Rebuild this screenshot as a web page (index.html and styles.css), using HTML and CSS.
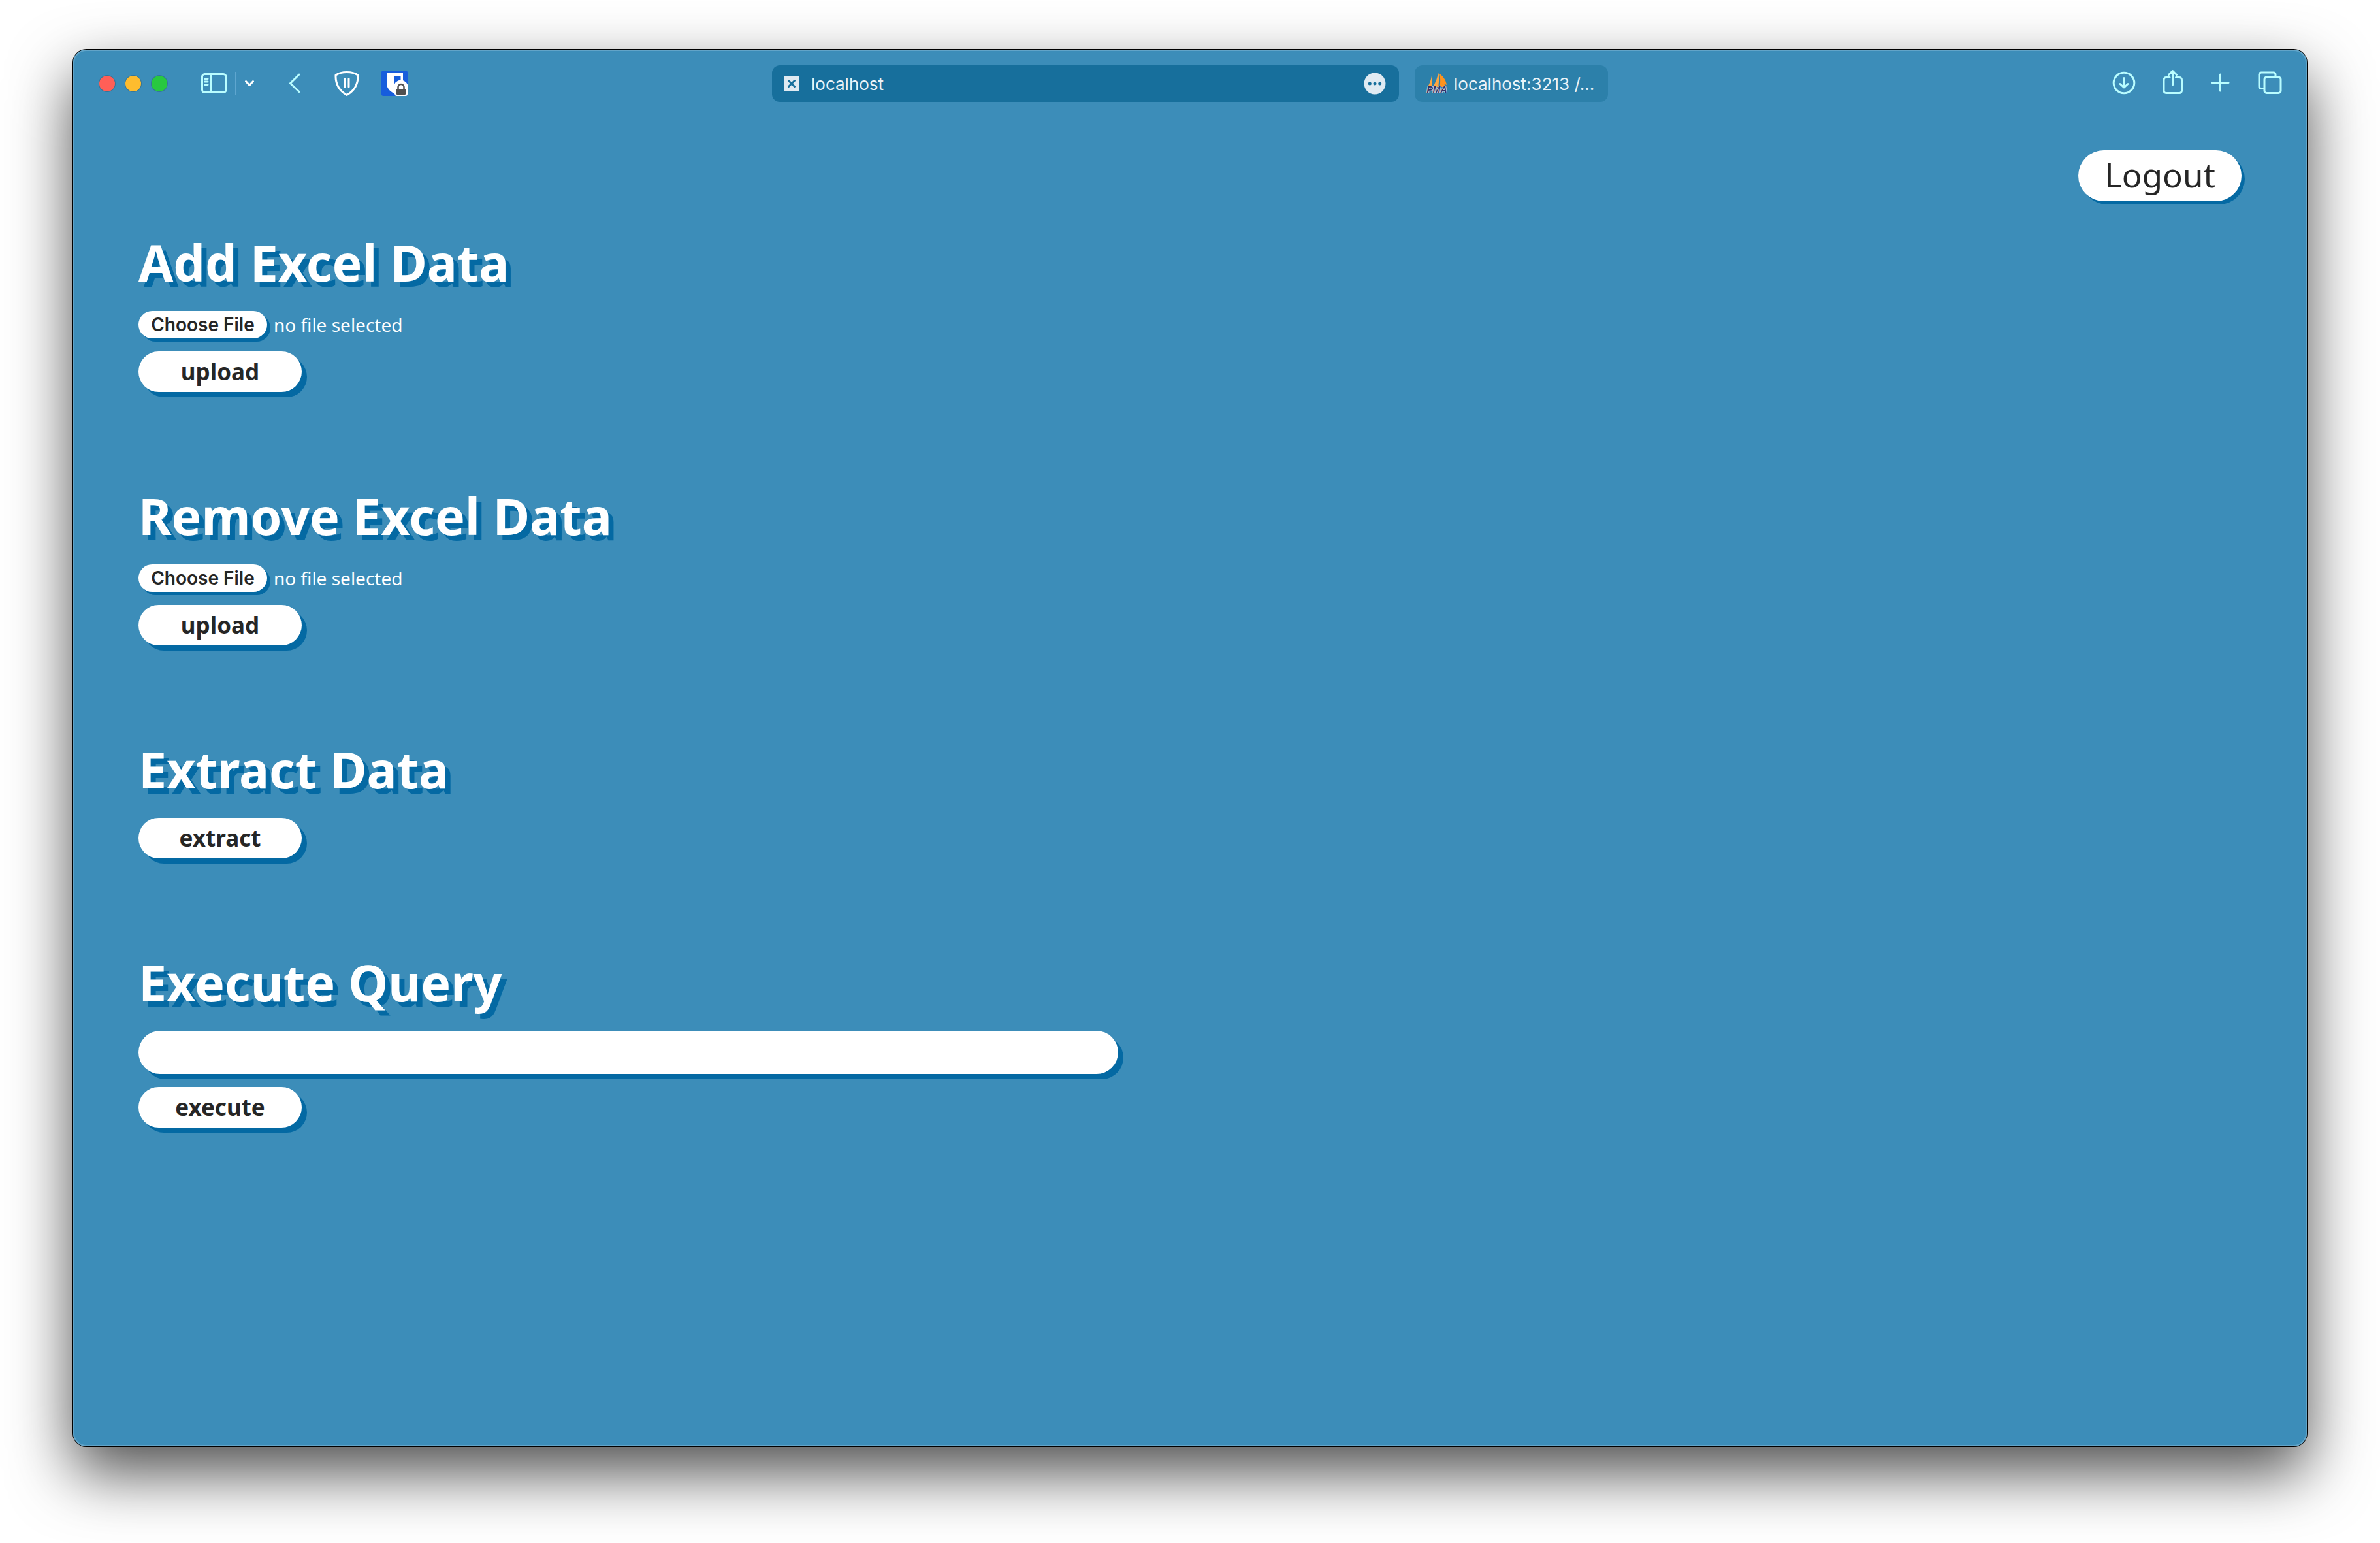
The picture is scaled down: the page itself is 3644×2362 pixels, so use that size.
FILE: index.html
```html
<!DOCTYPE html>
<html lang="en">
<head>
<meta charset="utf-8">
<title>localhost</title>
<link rel="stylesheet" href="styles.css">
</head>
<body>
<div class="window">
  <header class="toolbar">
    <div class="toolbar-left">
      <div class="lights">
        <button class="light light-close" aria-label="Close"></button>
        <button class="light light-minimise" aria-label="Minimise"></button>
        <button class="light light-zoom" aria-label="Zoom"></button>
      </div>
      <div class="sidebar-group">
        <button class="icon-button" aria-label="Sidebar">
          <svg width="40" height="40" viewBox="0 0 40 40" class="line-icon"><rect x="1.5" y="5.5" width="36.5" height="28" rx="4"/><path d="M14.5 5.5v28M5.5 12.5h4.5M5.5 17h4.5M5.5 21.5h4.5"/></svg>
        </button>
        <span class="divider"></span>
        <button class="icon-button" aria-label="Tab groups">
          <svg width="16" height="40" viewBox="0 0 16 40" class="line-icon white-icon"><path d="M2.5 16.5l5.5 6 5.5-6"/></svg>
        </button>
      </div>
      <button class="icon-button" aria-label="Back">
        <svg width="18" height="40" viewBox="0 0 18 40" class="line-icon"><path d="M16 6L2.5 19.5 16 32.5"/></svg>
      </button>
      <div class="extensions">
        <button class="icon-button" aria-label="Content blocker">
          <svg width="38" height="40" viewBox="0 0 38 40" class="line-icon white-icon"><path d="M2 7C7 3.500 13 2.500 19 2.500S31 3.500 36 7C36.500 20 32 30 19 37.500C6 30 1.500 20 2 7z"/><path d="M16 12.500v12.500M22 12.500v12.500"/></svg>
        </button>
        <button class="icon-button" aria-label="Password manager">
          <svg width="40" height="40" viewBox="0 0 40 40"><rect x="0" y="0" width="40" height="39" rx="3" fill="#175ddc"/><path d="M8 4h25v16c0 8-7 13-12.500 16C15 33 8 28 8 20z" fill="#fff"/><path d="M20 8h9.500v13H20z" fill="#175ddc"/><path d="M19.500 30a10.500 10.500 0 0 1 20.500-8.500V36a3 3 0 0 1-3 3H22c-2-2-2.500-5-2.500-9z" fill="#fff"/><rect x="23" y="28" width="14" height="9" rx="1" fill="#505050"/><path d="M25.500 28v-2.500a4.500 4.500 0 0 1 9 0V28" fill="none" stroke="#505050" stroke-width="2.500"/></svg>
        </button>
      </div>
    </div>
    <nav class="tabs" aria-label="Tabs">
      <div class="tab tab-active">
        <svg width="24" height="24" viewBox="0 0 24 24"><rect width="24" height="24" rx="4" fill="#dfeaf2"/><path d="M7.500 7.500l9 9M16.500 7.500l-9 9" stroke="#176f9c" stroke-width="3" stroke-linecap="round"/></svg>
        <span class="tab-title">localhost</span>
        <button class="icon-button" aria-label="Page menu">
          <svg width="34" height="34" viewBox="0 0 34 34"><circle cx="17" cy="17" r="16.500" fill="#dfeaf2"/><circle cx="9.300" cy="17" r="2.500" fill="#176f9c"/><circle cx="17" cy="17" r="2.500" fill="#176f9c"/><circle cx="24.700" cy="17" r="2.500" fill="#176f9c"/></svg>
        </button>
      </div>
      <a class="tab tab-other" href="#">
        <svg width="32" height="34" viewBox="0 0 32 34" class="favicon"><path d="M8 5.500C9 11 8.500 17 8.500 22H2C5 17 7 11 8 5.500z" fill="#ffa640"/><path d="M18 0C20.500 8 18.500 15 18.500 22H10C14 15 17 8 18 0z" fill="#ffa640"/><path d="M20 2C26 6 30 12 31 19L27.500 17.500L29 22H20.500C21.500 14 21.500 8 20 2z" fill="#ff931e"/><text x="16" y="31" text-anchor="middle" class="pma">PMA</text></svg>
        <span class="tab-title">localhost:3213 /...</span>
      </a>
    </nav>
    <div class="toolbar-right">
      <button class="icon-button" aria-label="Downloads">
        <svg width="36" height="40" viewBox="0 0 36 40" class="line-icon"><circle cx="18" cy="19" r="15.800"/><path d="M18 11.500v14M12 20.500l6 5.500 6-5.500"/></svg>
      </button>
      <button class="icon-button" aria-label="Share">
        <svg width="36" height="40" viewBox="0 0 36 40" class="line-icon favicon"><path d="M14 10.500H8.500a3.500 3.500 0 0 0-3.500 3.500V31a3.500 3.500 0 0 0 3.500 3.500h20A3.500 3.500 0 0 0 32.500 31V14a3.500 3.500 0 0 0-3.500-3.500H23.500M18.500 22V1M12.500 6.500L18.500 0.500l6 6"/></svg>
      </button>
      <button class="icon-button" aria-label="New tab">
        <svg width="36" height="40" viewBox="0 0 36 40" class="line-icon"><path d="M5 18.500h25M17.500 6v25"/></svg>
      </button>
      <button class="icon-button" aria-label="Tab overview">
        <svg width="36" height="40" viewBox="0 0 36 40" class="line-icon favicon"><path d="M28 9V6a3 3 0 0 0-3-3H6.500A3.500 3.500 0 0 0 3 6V24a3 3 0 0 0 3.500 3.500H10"/><rect x="11" y="10" width="25" height="24.500" rx="3.500"/></svg>
      </button>
    </div>
  </header>

  <main class="page">
    <button class="pill logout">Logout</button>

    <section class="block">
      <h2>Add Excel Data</h2>
      <div class="file-row">
        <input class="file" type="file" id="add-file">
        <label for="add-file">no file selected</label>
      </div>
      <button class="pill action">upload</button>
    </section>

    <section class="block">
      <h2>Remove Excel Data</h2>
      <div class="file-row">
        <input class="file" type="file" id="remove-file">
        <label for="remove-file">no file selected</label>
      </div>
      <button class="pill action">upload</button>
    </section>

    <section class="block">
      <h2>Extract Data</h2>
      <button class="pill action">extract</button>
    </section>

    <section class="block">
      <h2 id="query-title">Execute Query</h2>
      <input class="query" type="text" aria-labelledby="query-title">
      <button class="pill action">execute</button>
    </section>
  </main>
</div>
</body>
</html>
```
FILE: styles.css
```css
* {
  box-sizing: border-box;
}

body {
  margin: 0;
  padding: 76px 112px 148px;
  background: #fff;
  font-family: "Noto Sans", sans-serif;
}

button,
input {
  margin: 0;
  padding: 0;
  border: 0;
  font-family: inherit;
}

.window {
  min-height: calc(100vh - 224px);
  border-radius: 20px;
  background: #3c8db9;
  box-shadow:
    inset 0 0 0 2px #62a4c8,
    0 0 0 1px #000,
    0 40px 96px rgba(0, 0, 0, 0.7);
}

.toolbar {
  display: grid;
  grid-template-columns: minmax(0, 1fr) minmax(0, 1280px) minmax(0, 1fr);
  align-items: center;
  height: 104px;
  padding: 0 40px;
  font-family: Inter, sans-serif;
}

.toolbar-left {
  display: flex;
  align-items: center;
  gap: 52px;
}

.toolbar-right {
  display: flex;
  align-items: center;
  justify-content: flex-end;
  gap: 38px;
}

.lights {
  display: flex;
  gap: 16px;
}

.light {
  width: 24px;
  height: 24px;
  border-radius: 50%;
  box-shadow: 0 0 0 1px rgba(40, 80, 100, 0.4);
}

.light-close {
  background: #ff5f57;
}

.light-minimise {
  background: #febc2e;
}

.light-zoom {
  background: #28c840;
}

.sidebar-group {
  display: flex;
  align-items: center;
  gap: 12px;
}

.divider {
  width: 2px;
  height: 36px;
  background: #5fa6cf;
}

.extensions {
  display: flex;
  gap: 34px;
}

.icon-button {
  display: flex;
  background: none;
}

.line-icon {
  fill: none;
  stroke: #b9fdff;
  stroke-width: 3;
  stroke-linecap: round;
  stroke-linejoin: round;
}

.white-icon {
  stroke: #fff;
}

.favicon {
  overflow: visible;
}

.tabs {
  display: grid;
  grid-template-columns: minmax(0, 960fr) minmax(0, 296fr);
  gap: 24px;
}

.tab {
  display: flex;
  align-items: center;
  height: 56px;
  border-radius: 12px;
  color: #eaf3f8;
  font-size: 26px;
  text-decoration: none;
}

.tab-active {
  gap: 18px;
  padding: 0 20px 0 18px;
  background: #176f9c;
}

.tab-active .tab-title {
  flex: 1;
}

.tab-other {
  gap: 10px;
  padding: 0 18px;
  background: #2c80aa;
}

.tab-title {
  white-space: nowrap;
}

.pma {
  fill: #333366;
  stroke: #ccccdd;
  stroke-width: 2;
  paint-order: stroke;
  font: italic bold 14px "Liberation Sans", sans-serif;
}

.page {
  display: flex;
  flex-direction: column;
  padding: 50px 100px 80px;
}

.pill {
  border-radius: 40px;
  background: #fff;
  color: #262626;
}

.logout {
  align-self: flex-end;
  width: 250px;
  height: 78px;
  margin-bottom: 40px;
  padding-bottom: 4px;
  box-shadow: 5px 5px 0 #0469a3;
  font-size: 51px;
}

.block {
  display: flex;
  flex-direction: column;
  align-items: flex-start;
  gap: 20px;
  margin-bottom: 136px;
}

h2 {
  margin: 0;
  color: #fff;
  font-size: 77px;
  font-weight: 700;
  line-height: 108px;
  text-shadow: 8px 8px 0 #0469a3;
}

.file-row {
  display: flex;
  align-items: center;
  gap: 10px;
  color: #fff;
  font-size: 28px;
  line-height: 42px;
}

.file {
  width: 197px;
  height: 42px;
  border-radius: 21px;
  background: #fff;
  box-shadow: 5px 5px 0 #0469a3;
  font-size: 0;
}

.file::file-selector-button {
  width: 100%;
  height: 42px;
  margin: 0;
  padding: 0;
  border: 0;
  background: none;
  color: #262626;
  font: 600 28px/42px Inter, sans-serif;
}

.action {
  width: 250px;
  height: 62px;
  box-shadow: 8px 8px 0 #0469a3;
  font-size: 35px;
  font-weight: 700;
  line-height: 62px;
}

.query {
  width: 1500px;
  max-width: 100%;
  height: 66px;
  padding: 0 32px;
  border-radius: 33px;
  background: #fff;
  box-shadow: 8px 8px 0 #0469a3;
  color: #262626;
  font-size: 35px;
}
```
